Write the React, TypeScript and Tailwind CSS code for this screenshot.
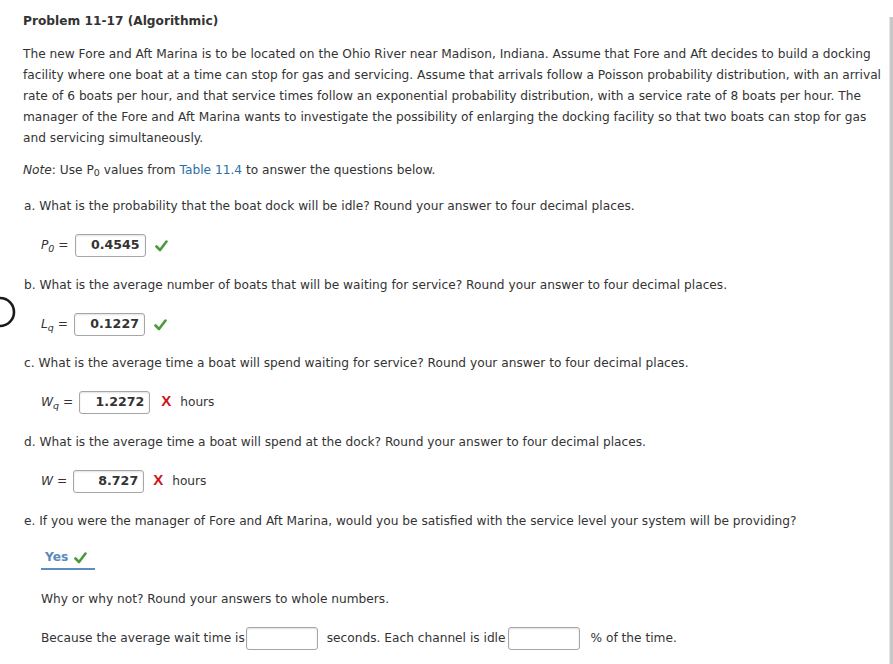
import React from 'react';

const font = { fontFamily: '"DejaVu Sans", Verdana, sans-serif' };

function Check() {
  return (
    <svg width="13" height="12" viewBox="0 0 13 12" className="shrink-0">
      <path d="M1.5 6.5 L5 10 L11.5 1.5" fill="none" stroke="#4a9a3c" strokeWidth="2.6" strokeLinecap="round" strokeLinejoin="round" />
    </svg>
  );
}

function Cross() {
  return (
    <span className="font-bold text-[15px] leading-none text-[#d0131a]" style={{ fontFamily: '"Liberation Sans", Arial, sans-serif' }}>
      X
    </span>
  );
}

function Box({ value, w = 'w-[71px]' }: { value?: string; w?: string }) {
  return (
    <div className={`${w} h-[23px] border border-[#a6a6a6] rounded-[3px] shadow-[inset_0_1px_2px_rgba(0,0,0,0.12)] bg-white flex items-center justify-end pr-[5px] font-bold text-[12.6px] text-[#333]`}>
      {value}
    </div>
  );
}

function Question({ children, className }: { children: React.ReactNode; className: string }) {
  return <p className={`pl-[1px] leading-[21px] ${className}`}>{children}</p>;
}

export default function App() {
  return (
    <div className="relative flex min-h-[664px] bg-white text-[12.2px] text-[#333]" style={font}>
      <svg width="20" height="36" viewBox="0 0 20 36" className="absolute left-0 top-[294px]">
        <circle cx="0" cy="18" r="14" fill="none" stroke="#1a1a1a" strokeWidth="2.6" />
      </svg>
      <main className="flex-1 pl-[23px] pr-[8px] pt-[11px]">
        <h1 className="font-bold leading-[21px]">Problem 11-17 (Algorithmic)</h1>

        <p className="mt-[12px] leading-[21px]">
          The new Fore and Aft Marina is to be located on the Ohio River near Madison, Indiana. Assume that Fore and Aft decides to build a docking facility where one boat at a time can stop for gas and servicing. Assume that arrivals follow a Poisson probability distribution, with an arrival rate of 6 boats per hour, and that service times follow an exponential probability distribution, with a service rate of 8 boats per hour. The manager of the Fore and Aft Marina wants to investigate the possibility of enlarging the docking facility so that two boats can stop for gas and servicing simultaneously.
        </p>

        <p className="mt-[11px] leading-[21px]">
          <i>Note</i>: Use P<sub className="text-[9.5px]">0</sub> values from <span className="text-[#2a6fa8]">Table 11.4</span> to answer the questions below.
        </p>

        <Question className="mt-[15px]">a. What is the probability that the boat dock will be idle? Round your answer to four decimal places.</Question>
        <div className="mt-[17px] ml-[18px] flex items-center gap-[6px]">
          <span className="italic">P<sub className="text-[9.5px]">0</sub> =</span>
          <Box value="0.4545" />
          <span className="ml-[3px]"><Check /></span>
        </div>

        <Question className="mt-[18px]">b. What is the average number of boats that will be waiting for service? Round your answer to four decimal places.</Question>
        <div className="mt-[17px] ml-[18px] flex items-center gap-[6px]">
          <span><i>L<sub className="text-[9.5px]">q</sub></i> =</span>
          <Box value="0.1227" />
          <span className="ml-[3px]"><Check /></span>
        </div>

        <Question className="mt-[17px]">c. What is the average time a boat will spend waiting for service? Round your answer to four decimal places.</Question>
        <div className="mt-[17px] ml-[18px] flex items-center gap-[6px]">
          <span><i>W<sub className="text-[9.5px]">q</sub></i> =</span>
          <Box value="1.2272" />
          <span className="ml-[5px]"><Cross /></span>
          <span className="ml-[3px]">hours</span>
        </div>

        <Question className="mt-[18px]">d. What is the average time a boat will spend at the dock? Round your answer to four decimal places.</Question>
        <div className="mt-[17px] ml-[18px] flex items-center gap-[6px]">
          <span><i>W</i> =</span>
          <Box value="8.727" />
          <span className="ml-[3px]"><Cross /></span>
          <span className="ml-[3px]">hours</span>
        </div>

        <Question className="mt-[18px]">e. If you were the manager of Fore and Aft Marina, would you be satisfied with the service level your system will be providing?</Question>
        <div className="mt-[15px] ml-[18px]">
          <div className="inline-flex items-center gap-[6px] pl-[4px] pr-[8px] border-b-2 border-[#5b8ec4]">
            <span className="font-bold text-[#5a89b8] leading-[21px]">Yes</span>
            <Check />
          </div>
        </div>

        <p className="mt-[19px] ml-[18px] leading-[21px]">Why or why not? Round your answers to whole numbers.</p>
        <div className="mt-[17px] ml-[18px] flex items-center">
          <span>Because the average wait time is</span>
          <span className="ml-[1px]"><Box w="w-[72px]" /></span>
          <span className="ml-[9px]">seconds. Each channel is idle</span>
          <span className="ml-[2px]"><Box w="w-[72px]" /></span>
          <span className="ml-[11px]">% of the time.</span>
        </div>
      </main>
      <aside className="w-[4px] mt-[17px] bg-[#c8c8c8] border-l border-[#e4e4e4]" />
    </div>
  );
}
